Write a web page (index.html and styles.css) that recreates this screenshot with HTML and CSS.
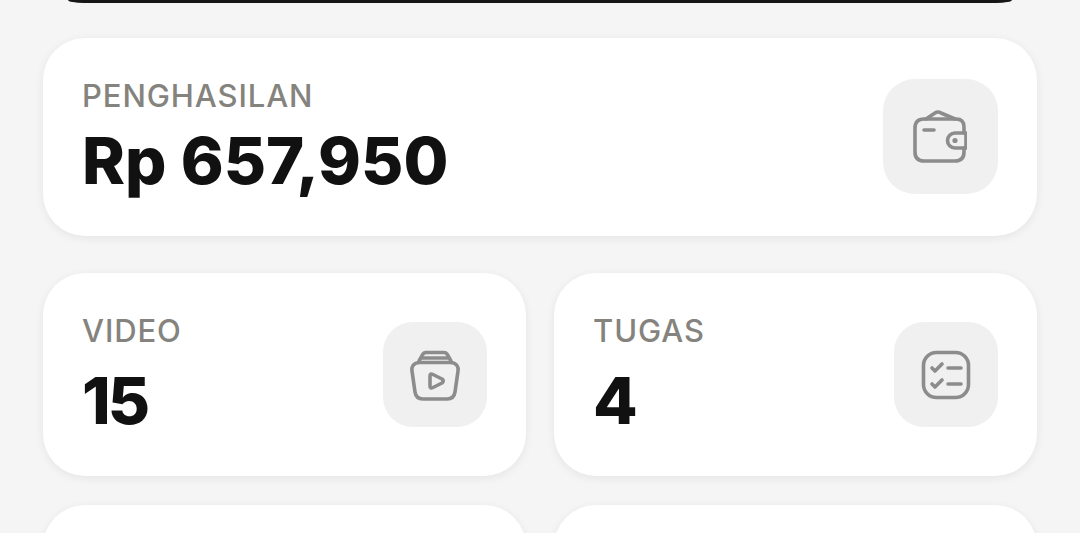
FILE: index.html
```html
<!DOCTYPE html>
<html lang="en">
<head>
    <meta charset="UTF-8">
    <meta name="viewport" content="width=device-width, initial-scale=1.0">
    <title>Dashboard</title>
    <link rel="stylesheet" href="styles.css">
</head>
<body>
    <div class="top-bar"></div>

    <div class="page">
        <div class="card card-wide">
            <div class="card-text">
                <div class="label">PENGHASILAN</div>
                <div class="value value-money">Rp 657,950</div>
            </div>
            <div class="icon-box icon-box-big">
                <svg class="icon" viewBox="0 0 54 54">
                    <path d="M13 9 L22 3 Q25 1 28 3 L42 9"/>
                    <path d="M51 23 V17 Q51 9 43 9 H11 Q2 9 2 18 V42 Q2 51 11 51 H42 Q51 51 51 42 V38"/>
                    <path d="M42 23 H53 V38 H42 A7.5 7.5 0 0 1 42 23 Z"/>
                    <path d="M11 20 H21"/>
                    <circle class="dot" cx="42" cy="30.5" r="1.6"/>
                </svg>
            </div>
        </div>

        <div class="card-row">
            <div class="card">
                <div class="card-text">
                    <div class="label">VIDEO</div>
                    <div class="value value-count">15</div>
                </div>
                <div class="icon-box">
                    <svg class="icon" viewBox="0 0 54 54">
                        <path d="M18 4.500 H36 Q38 4.500 39 6 L43 13"/>
                        <path d="M18 4.500 Q16 4.500 15 6 L11 13"/>
                        <path d="M14 10 H40"/>
                        <path d="M12 14.500 H42 Q47 14.500 49 17.500 Q50.500 19.500 50 23 L47 44 Q46 51 39 51 H15 Q8 51 7 44 L4 23 Q3.500 19.500 5 17.500 Q7 14.500 12 14.500 Z"/>
                        <path d="M22 28 Q22 25 25 26.500 L34 31 Q36.500 33 34 35 L25 39.500 Q22 41 22 38 Z"/>
                    </svg>
                </div>
            </div>
            <div class="card">
                <div class="card-text">
                    <div class="label">TUGAS</div>
                    <div class="value value-count">4</div>
                </div>
                <div class="icon-box">
                    <svg class="icon" viewBox="0 0 54 54">
                        <rect x="4.500" y="4.500" width="45" height="45" rx="13"/>
                        <path d="M13 20 L16 23 L23 16"/>
                        <path d="M13 36 L16 39 L23 32"/>
                        <path d="M29 20 H42"/>
                        <path d="M29 36 H42"/>
                    </svg>
                </div>
            </div>
        </div>

        <div class="card-row">
            <div class="card"></div>
            <div class="card"></div>
        </div>
    </div>
</body>
</html>
```

FILE: styles.css
```css
html, body {
    height: 533px;
    overflow: hidden;
}
body {
    margin: 0;
    background-color: #f5f5f5;
    font-family: "Inter", "Open Sans", sans-serif;
    color: #111;
}
.top-bar {
    height: 3px;
    margin: 0 68px;
    background-color: #161616;
    border-radius: 0 0 16px 16px / 0 0 3px 3px;
}
.page {
    display: flex;
    flex-direction: column;
    padding: 35px 43px 0;
}
.card {
    display: flex;
    align-items: center;
    justify-content: space-between;
    height: 203px;
    padding: 0 39px;
    box-sizing: border-box;
    background-color: #fff;
    border-radius: 42px;
    box-shadow: 0 2px 10px rgba(0,0,0,0.07);
}
.card-wide {
    height: 198px;
}
.card-row {
    display: grid;
    grid-template-columns: 1fr 1fr;
    gap: 28px;
    margin-top: 29px;
}
.card-wide + .card-row {
    margin-top: 37px;
}
.label {
    font-size: 31px;
    font-weight: 500;
    line-height: 36px;
    color: #85837e;
    letter-spacing: 0.9px;
}
.value {
    font-size: 65px;
    line-height: 72px;
    font-weight: 800;
}
.value-money {
    margin-top: 11px;
}
.value-count {
    margin-top: 16px;
    letter-spacing: -3px;
}
.icon-box {
    display: flex;
    align-items: center;
    justify-content: center;
    width: 104px;
    height: 105px;
    background-color: #f0f0f0;
    border-radius: 30px;
}
.icon-box-big {
    width: 115px;
    height: 115px;
    margin-bottom: 1px;
    border-radius: 32px;
}
.icon {
    width: 54px;
    height: 54px;
    fill: none;
    stroke: #8c8c8c;
    stroke-width: 3.6;
    stroke-linecap: round;
    stroke-linejoin: round;
}
.icon-box-big .icon {
    margin-left: -2px;
}
.dot {
    fill: #8c8c8c;
    stroke-width: 2;
}
```
